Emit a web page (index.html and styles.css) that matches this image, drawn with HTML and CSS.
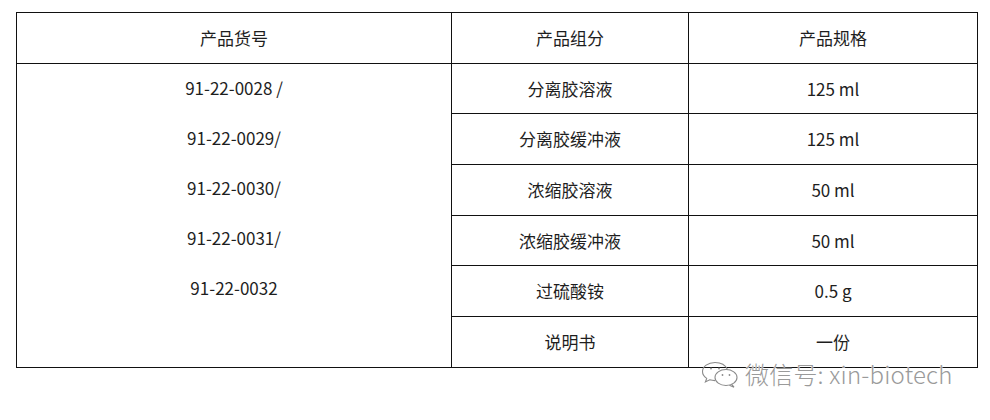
FILE: index.html
```html
<!DOCTYPE html>
<html lang="zh">
<head>
<meta charset="utf-8">
<link rel="stylesheet" href="styles.css">
</head>
<body>
<div class="page">
  <table class="spec">
    <colgroup>
      <col class="c1"><col class="c2"><col class="c3">
    </colgroup>
    <thead>
      <tr><th>产品货号</th><th>产品组分</th><th>产品规格</th></tr>
    </thead>
    <tbody>
      <tr>
        <td rowspan="6" class="codes">
          <p>91-22-0028 /</p>
          <p>91-22-0029/</p>
          <p>91-22-0030/</p>
          <p>91-22-0031/</p>
          <p>91-22-0032</p>
        </td>
        <td>分离胶溶液</td><td>125 ml</td>
      </tr>
      <tr><td>分离胶缓冲液</td><td>125 ml</td></tr>
      <tr><td>浓缩胶溶液</td><td>50 ml</td></tr>
      <tr><td>浓缩胶缓冲液</td><td>50 ml</td></tr>
      <tr><td>过硫酸铵</td><td>0.5 g</td></tr>
      <tr><td>说明书</td><td>一份</td></tr>
    </tbody>
  </table>
  <div class="watermark">
    <svg class="wx" width="40" height="28" viewBox="0 0 40 28" fill="none" stroke="#8a8a8a" stroke-width="1.1">
      <path d="M17 2.5c-7 0-12.5 4-12.5 9 0 2.8 1.6 5.2 4.2 6.9l-1.3 3.6 4.3-2.2c1.6.5 3.4.8 5.3.8"/>
      <path d="M29.5 9.5c-1.900-4.2-6.6-7-12.5-7"/>
      <ellipse cx="28" cy="17.5" rx="11" ry="8"/>
      <path d="M33.5 24.2l2.5 3-4.6-1.9"/>
      <circle cx="13" cy="8.5" r="0.9" fill="#8a8a8a" stroke="none"/>
      <circle cx="21" cy="8.5" r="0.9" fill="#8a8a8a" stroke="none"/>
      <circle cx="24.5" cy="15" r="0.9" fill="#8a8a8a" stroke="none"/>
      <circle cx="31.5" cy="15" r="0.9" fill="#8a8a8a" stroke="none"/>
    </svg>
    <span class="wtext">微信号: xin-biotech</span>
  </div>
</div>
</body>
</html>
```
FILE: styles.css
```css
html, body {
  margin: 0;
  padding: 0;
  background: #ffffff;
}
.page {
  position: relative;
  width: 990px;
  height: 420px;
  padding: 12px 0 0 16px;
  box-sizing: border-box;
  font-family: "Noto Sans CJK SC", "Noto Sans", sans-serif;
  color: #1e1e1e;
}
.spec {
  border-collapse: collapse;
  width: 961px;
  table-layout: fixed;
  font-size: 17px;
}
.c1 { width: 435px; }
.c2 { width: 237px; }
.c3 { width: 289px; }
.spec th, .spec td {
  border: 1px solid #111111;
  text-align: center;
  vertical-align: middle;
  font-weight: normal;
  height: 50.7px;
  box-sizing: border-box;
  padding: 0;
  line-height: 20px;
}
.spec td.codes {
  vertical-align: top;
}
.codes p {
  margin: 0;
  height: 50px;
  line-height: 48px;
}
.watermark {
  position: absolute;
  left: 698px;
  top: 360px;
  display: flex;
  align-items: center;
  gap: 7px;
}
.wtext {
  font-family: "Noto Sans CJK SC", "Noto Sans", sans-serif;
  font-size: 24px;
  font-weight: 300;
  line-height: 28px;
  color: #9a9a9a;
  letter-spacing: 0.2px;
  text-shadow: 0 0 1px #ffffff, 0 0 1px #ffffff;
}
```
